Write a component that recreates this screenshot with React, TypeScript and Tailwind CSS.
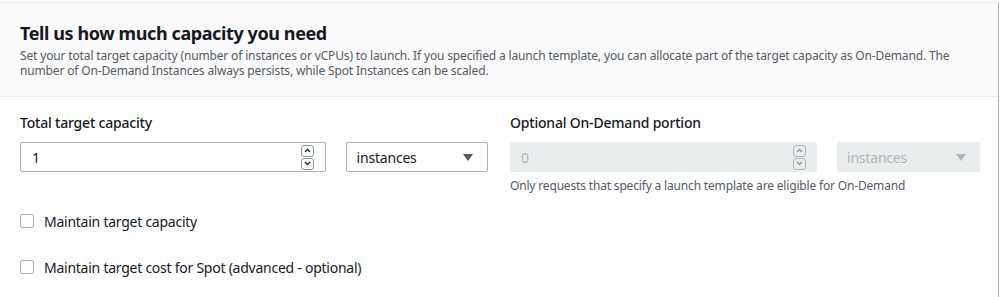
import React from 'react';

function Spinner({ disabled }: { disabled?: boolean }) {
  const c = disabled ? 'border-[#aab7b8] text-[#879596]' : 'border-[#879596] text-[#16191f]';
  return (
    <div className="flex flex-col gap-[1px]">
      <div className={`w-[13px] h-[12px] border rounded-[3px] flex items-center justify-center ${c}`}>
        <svg width="7" height="5" viewBox="0 0 7 5" fill="none" stroke="currentColor" strokeWidth="1.3">
          <path d="M1 4 L3.5 1.5 L6 4" />
        </svg>
      </div>
      <div className={`w-[13px] h-[12px] border rounded-[3px] flex items-center justify-center ${c}`}>
        <svg width="7" height="5" viewBox="0 0 7 5" fill="none" stroke="currentColor" strokeWidth="1.3">
          <path d="M1 1 L3.5 3.5 L6 1" />
        </svg>
      </div>
    </div>
  );
}

function NumberField({ value, disabled }: { value: string; disabled?: boolean }) {
  return (
    <div
      className={`w-[307px] h-[30px] rounded-[2px] flex items-center justify-between pl-[11px] pr-[11px] ${
        disabled ? 'bg-[#eaeded] text-[#aab7b8]' : 'bg-white border border-[#aab7b8] text-[#16191f]'
      }`}
    >
      <span className="text-[14px]">{value}</span>
      <Spinner disabled={disabled} />
    </div>
  );
}

function UnitSelect({ disabled }: { disabled?: boolean }) {
  return (
    <div
      className={`w-[143px] h-[30px] rounded-[2px] flex items-center justify-between pl-[10px] pr-[14px] ${
        disabled ? 'bg-[#eaeded] text-[#aab7b8]' : 'bg-white border border-[#aab7b8] text-[#16191f]'
      }`}
    >
      <span className="text-[14px] tracking-[-0.2px]">instances</span>
      <svg width="10" height="7" viewBox="0 0 10 7">
        <path d="M0 0 H10 L5 7 Z" fill={disabled ? '#aab7b8' : '#545b64'} />
      </svg>
    </div>
  );
}

function CheckRow({ label }: { label: string }) {
  return (
    <div className="flex items-center gap-[10px] h-[20px]">
      <div className="w-[14px] h-[14px] border border-[#aab7b8] rounded-[2px] bg-white" />
      <span className="text-[14px] tracking-[-0.25px] text-[#16191f]">{label}</span>
    </div>
  );
}

export default function App() {
  return (
    <div className="w-[1001px] h-[297px] bg-white pt-[2px] overflow-hidden" style={{ fontFamily: '"Noto Sans", "Open Sans", sans-serif' }}>
      <div className="h-[295px] border-t border-r border-t-[#eaeded] border-r-[#aab7b8] mr-[2px]">
        <div className="bg-[#fafafa] border-b border-[#eaeded] h-[94px] pl-[20px] pt-[18px]">
          <h2 className="text-[18px] leading-[24px] font-bold tracking-[-0.4px] text-[#16191f]">Tell us how much capacity you need</h2>
          <p className="text-[12px] leading-[15px] tracking-[-0.15px] text-[#545b64] mt-[3px] pr-[30px]">
            Set your total target capacity (number of instances or vCPUs) to launch. If you specified a launch template, you can allocate part of the target capacity as On-Demand. The number of On-Demand Instances always persists, while Spot Instances can be scaled.
          </p>
        </div>
        <div className="pl-[20px] pt-[16px]">
          <div className="flex gap-[22px]">
            <div className="w-[468px]">
              <div className="text-[14px] leading-[20px] font-medium tracking-[-0.2px] text-[#16191f]">Total target capacity</div>
              <div className="flex gap-[20px] mt-[9px]">
                <NumberField value="1" />
                <UnitSelect />
              </div>
            </div>
            <div>
              <div className="text-[14px] leading-[20px] font-medium tracking-[-0.2px] text-[#16191f]">Optional On-Demand portion</div>
              <div className="flex gap-[20px] mt-[9px]">
                <NumberField value="0" disabled />
                <UnitSelect disabled />
              </div>
              <div className="text-[12px] leading-[16px] tracking-[-0.17px] text-[#545b64] mt-[6px]">
                Only requests that specify a launch template are eligible for On-Demand
              </div>
            </div>
          </div>
          <div className="flex flex-col gap-[26px] mt-[17px]">
            <CheckRow label="Maintain target capacity" />
            <CheckRow label="Maintain target cost for Spot (advanced - optional)" />
          </div>
        </div>
      </div>
    </div>
  );
}
